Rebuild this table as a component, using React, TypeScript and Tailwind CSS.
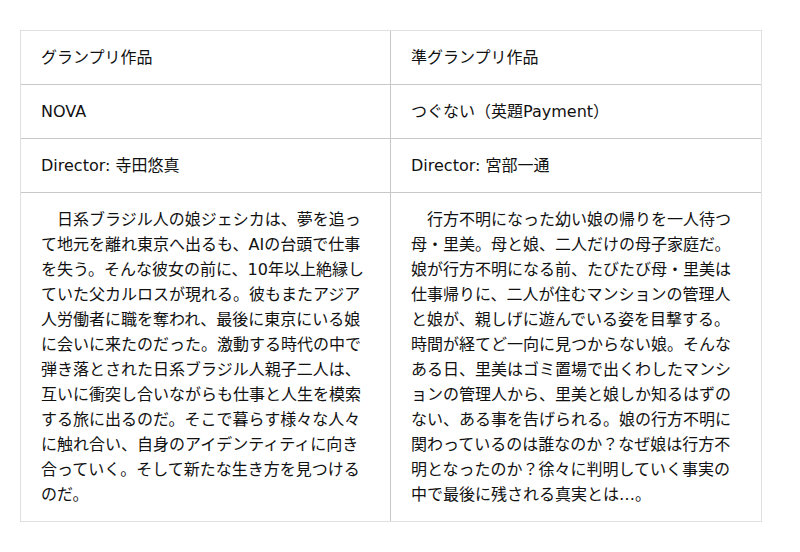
import React from "react";

const font = { fontFamily: '"DejaVu Sans", "Noto Sans CJK JP", sans-serif' };

function Cell({ children, right }: { children: React.ReactNode; right?: boolean }) {
  return (
    <div className={`w-1/2 px-5 py-[14px] ${right ? "" : "border-r border-[#c8c8c8]"}`}>{children}</div>
  );
}

export default function App() {
  const left =
    "\u3000日系ブラジル人の娘ジェシカは、夢を追って地元を離れ東京へ出るも、AIの台頭で仕事を失う。そんな彼女の前に、10年以上絶縁していた父カルロスが現れる。彼もまたアジア人労働者に職を奪われ、最後に東京にいる娘に会いに来たのだった。激動する時代の中で弾き落とされた日系ブラジル人親子二人は、互いに衝突し合いながらも仕事と人生を模索する旅に出るのだ。そこで暮らす様々な人々に触れ合い、自身のアイデンティティに向き合っていく。そして新たな生き方を見つけるのだ。";
  const right =
    "\u3000行方不明になった幼い娘の帰りを一人待つ母・里美。母と娘、二人だけの母子家庭だ。娘が行方不明になる前、たびたび母・里美は仕事帰りに、二人が住むマンションの管理人と娘が、親しげに遊んでいる姿を目撃する。時間が経てど一向に見つからない娘。そんなある日、里美はゴミ置場で出くわしたマンションの管理人から、里美と娘しか知るはずのない、ある事を告げられる。娘の行方不明に関わっているのは誰なのか？なぜ娘は行方不明となったのか？徐々に判明していく事実の中で最後に残される真実とは…。";
  const rows: [React.ReactNode, React.ReactNode][] = [
    ["グランプリ作品", "準グランプリ作品"],
    ["NOVA", "つぐない（英題Payment）"],
    ["Director: 寺田悠真", "Director: 宮部一通"],
  ];
  return (
    <div className="w-[800px] h-[552px] bg-white pt-[30px] pl-[20px]" style={font}>
      <div className="w-[742px] border border-[#e0e0e0] text-[16px] leading-[25px] text-[#111]">
        {rows.map((r, i) => (
          <div key={i} className="flex border-b border-[#c8c8c8]">
            <Cell>{r[0]}</Cell>
            <Cell right>{r[1]}</Cell>
          </div>
        ))}
        <div className="flex">
          <div className="w-1/2 px-5 py-[14px] border-r border-[#c8c8c8] break-all">{left}</div>
          <div className="w-1/2 px-5 py-[14px] break-all">{right}</div>
        </div>
      </div>
    </div>
  );
}
